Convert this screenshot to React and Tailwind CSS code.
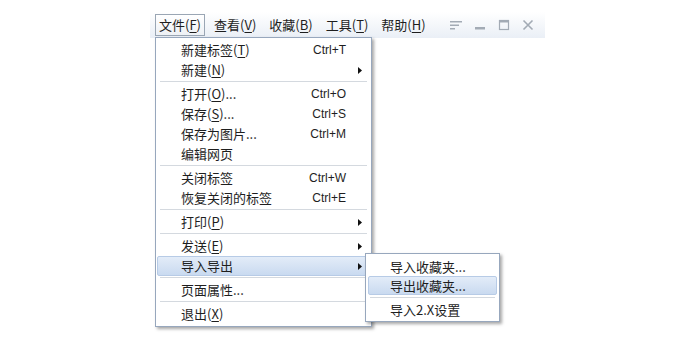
import React from 'react'

const cjk = { fontFamily: '"Noto Sans CJK SC", "Noto Sans", sans-serif' }

const mainItems = [
  { label: '新建标签', key: 'T', shortcut: 'Ctrl+T' },
  { label: '新建', key: 'N', arrow: true },
  'sep',
  { label: '打开', key: 'O', dots: true, shortcut: 'Ctrl+O' },
  { label: '保存', key: 'S', dots: true, shortcut: 'Ctrl+S' },
  { label: '保存为图片...', shortcut: 'Ctrl+M' },
  { label: '编辑网页' },
  'sep',
  { label: '关闭标签', shortcut: 'Ctrl+W' },
  { label: '恢复关闭的标签', shortcut: 'Ctrl+E' },
  'sep',
  { label: '打印', key: 'P', arrow: true },
  'sep',
  { label: '发送', key: 'E', arrow: true },
  { label: '导入导出', arrow: true, active: true },
  'sep',
  { label: '页面属性...' },
  'sep',
  { label: '退出', key: 'X' },
]

const Arrow = () => (
  <svg width="4" height="7" viewBox="0 0 4 7" className="block">
    <path d="M0 0 L4 3.5 L0 7 Z" fill="#111" />
  </svg>
)

const Label = ({ label, k, dots }) => (
  <span className="whitespace-nowrap">
    {label}
    {k && (
      <>
        (<span className="underline underline-offset-2">{k}</span>)
      </>
    )}
    {dots && '...'}
  </span>
)

const Row = ({ item }) => (
  <div
    className={
      'mx-[1px] flex h-[20px] items-center pl-[23px] pr-[6px] text-[13px] text-[#1e1e1e] ' +
      (item.active ? 'border border-[#b7cbe6] bg-gradient-to-b from-[#e3ecf8] to-[#c9daf0] rounded-[2px]' : 'border border-transparent')
    }
  >
    <div className="flex-1">
      <Label label={item.label} k={item.key} dots={item.dots} />
    </div>
    <div className="w-[60px] text-right text-[12px]" style={{ fontFamily: '"Liberation Sans", sans-serif' }}>
      {item.shortcut}
    </div>
    <div className="flex w-[17px] justify-end pr-[1px]">{item.arrow && <Arrow />}</div>
  </div>
)

const Sep = () => <div className="mx-[4px] mt-[1px] mb-[2px] h-px bg-[#d4d9df]" />

const MenuBar = () => {
  const items = [
    ['文件', 'F'],
    ['查看', 'V'],
    ['收藏', 'B'],
    ['工具', 'T'],
    ['帮助', 'H'],
  ]
  return (
    <div className="flex h-[26px] w-[395px] items-center bg-gradient-to-b from-white to-[#eaeff6] pl-[5px] pr-[10px]">
      <div className="flex gap-[5px]">
        {items.map(([t, k], i) => (
          <div
            key={t}
            className={
              'flex h-[22px] items-center px-[3px] text-[13px] text-[#1e1e1e] ' +
              (i === 0 ? 'border border-[#9aa6b4] bg-gradient-to-b from-white to-[#eef1f5]' : 'border border-transparent')
            }
          >
            <Label label={t} k={k} />
          </div>
        ))}
      </div>
      <div className="ml-auto flex items-center gap-[10px]">
        <svg width="14" height="12" viewBox="0 0 14 12">
          <rect x="1" y="2" width="12" height="1.5" fill="#a3abb5" />
          <rect x="1" y="5.5" width="9" height="1.5" fill="#a3abb5" />
          <rect x="1" y="9" width="5" height="1.5" fill="#a3abb5" />
        </svg>
        <svg width="14" height="12" viewBox="0 0 14 12">
          <rect x="2" y="8" width="10" height="2.5" fill="#a3abb5" />
        </svg>
        <svg width="14" height="12" viewBox="0 0 14 12">
          <rect x="2.5" y="1.5" width="9" height="9" fill="none" stroke="#a3abb5" strokeWidth="1.2" />
          <rect x="2" y="1" width="10" height="2.5" fill="#a3abb5" />
        </svg>
        <svg width="14" height="12" viewBox="0 0 14 12">
          <path d="M2.5 1.5 L11.5 10.5 M11.5 1.5 L2.5 10.5" stroke="#a3abb5" strokeWidth="1.6" />
        </svg>
      </div>
    </div>
  )
}

const SubMenu = () => (
  <div
    className="absolute left-[210px] top-[216px] w-[135px] border border-[#97a7bd] bg-white pt-[3px] pb-[2px] shadow-[2px_2px_3px_rgba(0,0,0,0.35)]"
    style={cjk}
  >
    <div className="mx-[2px] flex h-[19px] items-center border border-transparent pl-[21px] text-[13px] text-[#1e1e1e]">导入收藏夹...</div>
    <div className="mx-[2px] flex h-[19px] items-center rounded-[2px] border border-[#b7cbe6] bg-gradient-to-b from-[#e3ecf8] to-[#c9daf0] pl-[21px] text-[13px] text-[#1e1e1e]">
      导出收藏夹...
    </div>
    <div className="mx-[4px] my-[2px] h-px bg-[#d4d9df]" />
    <div className="mx-[2px] flex h-[19px] items-center border border-transparent pl-[21px] text-[13px] text-[#1e1e1e]">导入2.X设置</div>
  </div>
)

const App = () => {
  return (
    <div className="h-[343px] w-[680px] bg-white pl-[150px] pt-[12px]" style={cjk}>
      <MenuBar />
      <div className="relative ml-[5px] -mt-[1px]">
        <div className="w-[217px] border border-[#97a7bd] bg-white pt-[2px] pb-[2px] shadow-[2px_2px_3px_rgba(0,0,0,0.35)]">
          {mainItems.map((item, i) => (item === 'sep' ? <Sep key={i} /> : <Row key={i} item={item} />))}
        </div>
        <SubMenu />
      </div>
    </div>
  )
}

export default App
